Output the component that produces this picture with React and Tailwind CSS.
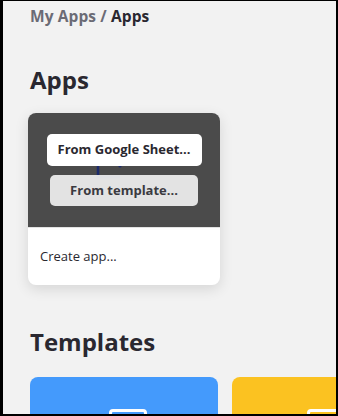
export default function App() {
  return (
    <div
      className="w-[338px] h-[416px] overflow-hidden bg-[#f2f2f2] border-l-[3px] border-t border-r-2 border-b-2 border-black"
      style={{ fontFamily: '"Open Sans", "Noto Sans", sans-serif' }}
    >
      <div className="pl-[27px] pt-[5px]">
        <p className="text-[15.5px] font-bold leading-5 tracking-[0.1px]">
          <span className="text-[#6b6b75]">My Apps / </span>
          <span className="text-[#2a2830]">Apps</span>
        </p>

        <h1 className="mt-[38px] text-[24px] font-bold leading-8 text-[#2a2830]">Apps</h1>

        <div className="mt-[17px] ml-[-2px] w-[192px] rounded-lg bg-white overflow-hidden shadow-[0_4px_14px_rgba(0,0,0,0.12)]">
          <div className="relative h-[114px] bg-[#4b4b4b] flex flex-col items-center justify-center gap-[9px]">
            <svg className="absolute left-[68px] top-[50px]" width="28" height="20" viewBox="0 0 28 20">
              <path d="M2 2v12h22" stroke="#1c2a6b" strokeWidth="2.5" fill="none" />
              <circle cx="24" cy="3" r="1.6" fill="#1c2a6b" />
            </svg>
            <button className="relative w-[155px] h-[32px] rounded-[5px] bg-white text-[13px] font-bold text-[#2a2830]">
              From Google Sheet...
            </button>
            <button className="relative w-[148px] h-[31px] rounded-[5px] bg-[#ebebeb]/95 text-[13px] font-bold text-[#3a3a40]">
              From template...
            </button>
          </div>
          <div className="h-[58px] border-t border-[#e2e2e2] flex items-center pl-[12px] text-[13px] text-[#2a2830]">
            Create app...
          </div>
        </div>

        <h2 className="mt-[41px] text-[24px] font-bold leading-8 text-[#2a2830]">Templates</h2>

        <div className="mt-[19px] flex gap-[14px]">
          <div className="shrink-0 w-[188px] h-[80px] rounded-lg bg-[#449afc] flex justify-center pt-[32px]">
            <div className="w-[38px] h-[30px] rounded-[4px] border-[3px] border-white ml-[8px]" />
          </div>
          <div className="shrink-0 w-[188px] h-[80px] rounded-lg bg-[#fbc221] flex justify-center pt-[32px]">
            <div className="w-[38px] h-[30px] rounded-[4px] border-[3px] border-white" />
          </div>
        </div>
      </div>
    </div>
  );
}
